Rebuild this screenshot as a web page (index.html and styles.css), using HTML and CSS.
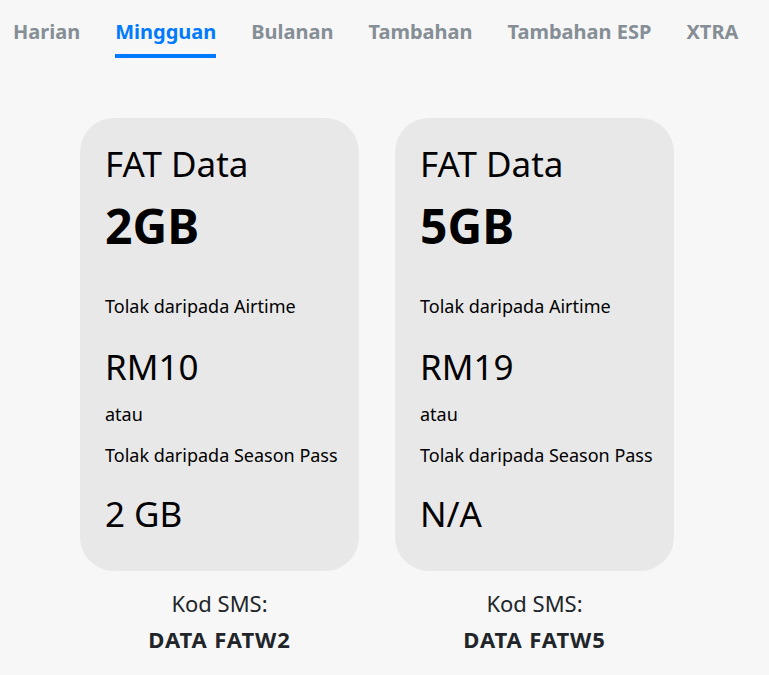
FILE: index.html
```html
<!DOCTYPE html>
<html lang="ms">
<head>
<meta charset="utf-8">
<title>FAT Data</title>
<link rel="stylesheet" href="styles.css">
</head>
<body>
<nav class="tabs">
  <span class="tab">Harian</span>
  <span class="tab active">Mingguan</span>
  <span class="tab">Bulanan</span>
  <span class="tab">Tambahan</span>
  <span class="tab">Tambahan ESP</span>
  <span class="tab">XTRA</span>
</nav>
<main class="plans">
  <section class="plan">
    <div class="card">
      <div class="title">FAT Data</div>
      <div class="size">2GB</div>
      <div class="label first">Tolak daripada Airtime</div>
      <div class="price">RM10</div>
      <div class="label or">atau</div>
      <div class="label pass">Tolak daripada Season Pass</div>
      <div class="price last">2 GB</div>
    </div>
    <div class="sms">Kod SMS:</div>
    <div class="code">DATA FATW2</div>
  </section>
  <section class="plan">
    <div class="card">
      <div class="title">FAT Data</div>
      <div class="size">5GB</div>
      <div class="label first">Tolak daripada Airtime</div>
      <div class="price">RM19</div>
      <div class="label or">atau</div>
      <div class="label pass">Tolak daripada Season Pass</div>
      <div class="price last">N/A</div>
    </div>
    <div class="sms">Kod SMS:</div>
    <div class="code">DATA FATW5</div>
  </section>
</main>
</body>
</html>
```
FILE: styles.css
```css
html, body {
  margin: 0;
  padding: 0;
  background: #f7f7f7;
}
body {
  font-family: "Noto Sans", "Open Sans", sans-serif;
  color: #000;
}
.tabs {
  display: flex;
  gap: 35px;
  padding: 18px 0 0 13px;
}
.tab {
  font-size: 20px;
  font-weight: 700;
  line-height: 28px;
  color: #868e96;
  padding-bottom: 8px;
  border-bottom: 4px solid transparent;
}
.tab.active {
  color: #007bff;
  border-bottom-color: #007bff;
}
.plans {
  display: flex;
  gap: 36px;
  padding: 60px 0 0 80px;
}
.plan {
  width: 279px;
  text-align: center;
}
.card {
  background: #e8e8e8;
  border-radius: 34px;
  padding: 24px 16px 35px 25px;
  text-align: left;
}
.title {
  font-size: 35px;
  line-height: 44px;
}
.size {
  font-size: 48px;
  font-weight: 700;
  line-height: 56px;
  margin-top: 12px;
}
.label {
  font-size: 18px;
  line-height: 24px;
}
.label.first { margin-top: 40px; }
.price {
  font-size: 35px;
  line-height: 44px;
  margin-top: 27px;
}
.label.or { margin-top: 13px; }
.label.pass { margin-top: 17px; }
.price.last { margin-top: 25px; }
.sms {
  font-size: 22px;
  line-height: 30px;
  color: #212529;
  margin-top: 17px;
}
.code {
  font-size: 22px;
  font-weight: 700;
  line-height: 30px;
  letter-spacing: 0.9px;
  color: #212529;
  margin-top: 6px;
}
```
